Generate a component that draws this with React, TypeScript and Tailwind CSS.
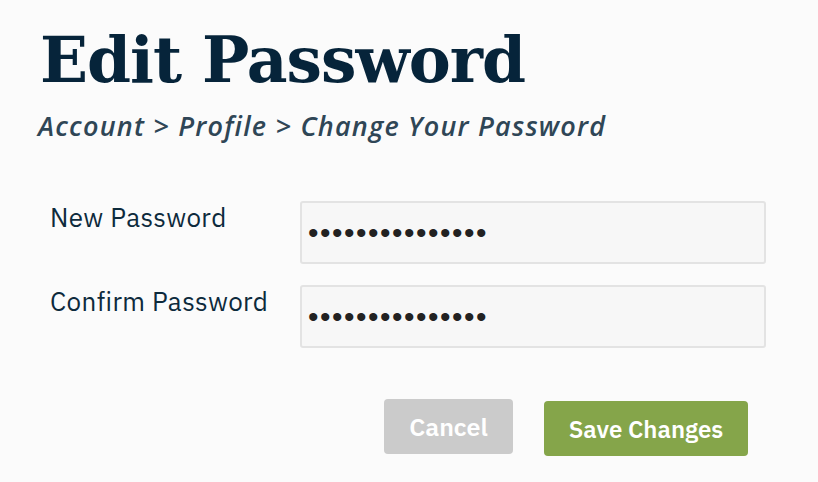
import React from 'react'

const sans = "font-['IBM_Plex_Sans','Roboto','Liberation_Sans',sans-serif]"

function Field({ label, value }: { label: string; value: string }) {
  return (
    <div className="flex items-start">
      <label className={`w-[250px] text-[26px] leading-[32px] tracking-[0.4px] text-[#0d2a3c] ${sans}`}>
        {label}
      </label>
      <input
        type="password"
        readOnly
        value={value}
        className="h-[63px] w-[466px] rounded-[3px] border-2 border-[#e3e3e3] bg-[#f7f7f7] px-[6px] text-[30px] tracking-[1.5px] text-[#222] outline-none font-['Liberation_Sans',sans-serif]"
      />
    </div>
  )
}

export default function App() {
  return (
    <div className="h-[482px] w-[818px] bg-[#fbfbfb] px-[40px] pt-[24px]">
      <h1 className="text-[63px] leading-[72px] font-bold text-[#06243a] font-['DejaVu_Serif',serif] tracking-[-1px]">
        Edit Password
      </h1>
      <p className="mt-[14px] text-[27px] leading-[32px] italic font-semibold tracking-[1.2px] text-[#2f4656] font-['Open_Sans',sans-serif] -ml-[2px]">
        Account &gt; Profile &gt; Change Your Password
      </p>
      <div className="mt-[59px] ml-[10px] flex flex-col gap-[21px]">
        <Field label="New Password" value="aaaaaaaaaaaaaaa" />
        <Field label="Confirm Password" value="aaaaaaaaaaaaaaa" />
      </div>
      <div className="mt-[51px] flex items-start justify-end gap-[31px] pr-[30px]">
        <button className={`h-[55px] w-[129px] rounded-[4px] bg-[#cbcbcb] text-[25px] font-semibold text-white ${sans}`}>
          Cancel
        </button>
        <button className={`mt-[2px] h-[55px] w-[204px] rounded-[4px] bg-[#85a54a] text-[24px] font-semibold text-white ${sans}`}>
          Save Changes
        </button>
      </div>
    </div>
  )
}
